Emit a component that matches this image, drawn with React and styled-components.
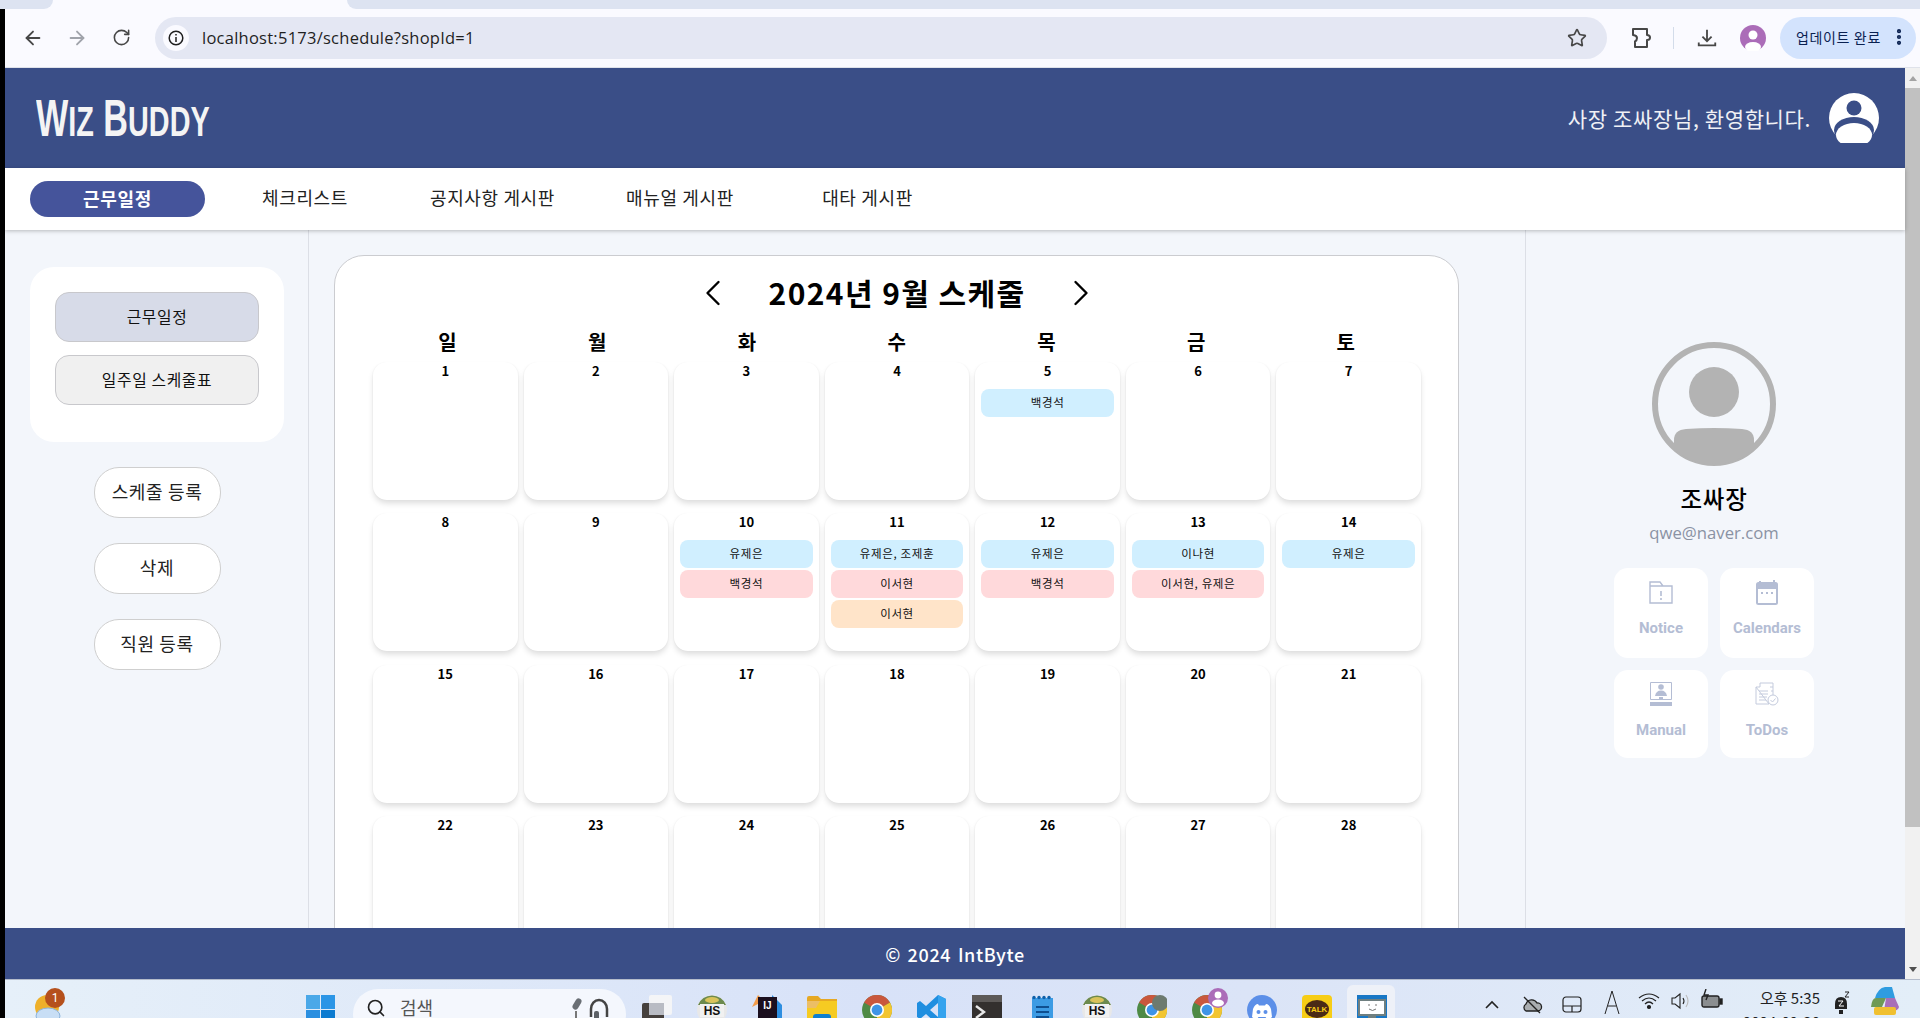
import React from 'react';
import styled, { createGlobalStyle } from 'styled-components';
import { ArrowLeft, ArrowRight, RotateCw, Star, EllipsisVertical, ChevronLeft, ChevronRight, Search } from 'lucide-react';

const Global = createGlobalStyle`
  html, body { margin: 0; padding: 0; height: 100%; overflow: hidden; }
  * { box-sizing: border-box; }
  body { font-family: "Noto Sans CJK KR", "Noto Sans", sans-serif; color: #000; letter-spacing: 0.04em; }
`;

const Screen = styled.div`
  width: 1920px;
  height: 1018px;
  overflow: hidden;
  background: #000;
  padding-left: 5px;
  display: flex;
  flex-direction: column;
`;

/* browser chrome */
const TabStrip = styled.div`
  height: 9px;
  background: #fafaff;
  display: flex;
  justify-content: space-between;
  margin-left: -5px;
`;
const TabGap = styled.div`
  height: 9px;
  width: ${p => p.$w};
  background: #dde3f1;
  border-radius: ${p => p.$radius};
`;
const Toolbar = styled.div`
  height: 59px;
  background: #fafaff;
  border-bottom: 1px solid #dfe2ea;
  display: flex;
  align-items: center;
  padding: 0 0 1px 6px;
  color: #474747;
`;
const NavIcon = styled.div`
  width: 44px;
  display: flex;
  justify-content: center;
  color: ${p => p.$dim ? '#a0a3ab' : '#474747'};
`;
const Omnibox = styled.div`
  margin: 0 12px;
  width: 1452px;
  height: 42px;
  border-radius: 21px;
  background: #e4e7f3;
  display: flex;
  align-items: center;
  padding: 0 20px 0 8px;
`;
const InfoDot = styled.div`
  width: 26px;
  height: 26px;
  border-radius: 50%;
  background: #fafaff;
  display: flex;
  align-items: center;
  justify-content: center;
  color: #1f1f1f;
`;
const UrlText = styled.span`
  margin-left: 13px;
  font: 16.5px "Open Sans", sans-serif;
  letter-spacing: 0.25px;
  color: #1f1f1f;
  flex: 1;
`;
const Separator = styled.div`
  width: 1px;
  height: 22px;
  background: #d3dcea;
  margin: 0 10px;
`;
const DownloadSlot = styled.div`
  width: 22px;
  margin-left: 12px;
  display: flex;
  justify-content: center;
`;
const ProfileDot = styled.div`
  width: 26px;
  height: 26px;
  margin: 0 14px 0 22px;
`;
const UpdatePill = styled.div`
  width: 136px;
  height: 42px;
  border-radius: 21px;
  background: #d3e3fd;
  display: flex;
  align-items: center;
  justify-content: space-between;
  padding: 0 7px 2px 16px;
  font-size: 14px;
  color: #0a2151;
  white-space: nowrap;
`;

/* page */
const PageRow = styled.div`
  flex: 1;
  min-height: 0;
  display: flex;
`;
const Page = styled.div`
  flex: 1;
  min-width: 0;
  display: flex;
  flex-direction: column;
`;
const ScrollBar = styled.div`
  width: 15px;
  background: #f1f1f1;
  display: flex;
  flex-direction: column;
  align-items: center;
`;
const ScrollArrow = styled.div`
  height: 20px;
  display: flex;
  align-items: center;
  &::before {
    content: '';
    border-left: 4px solid transparent;
    border-right: 4px solid transparent;
    ${p => p.$down ? 'border-top: 5px solid #505050;' : 'border-bottom: 5px solid #a3a3a3;'}
  }
`;
const ScrollThumb = styled.div`
  width: 15px;
  height: 739px;
  margin-bottom: auto;
  background: #c1c1c1;
`;
const Header = styled.header`
  height: 100px;
  background: #3a4e87;
  display: flex;
  align-items: center;
  justify-content: space-between;
  padding: 0 26px 0 31px;
`;
const Logo = styled.div`
  font: 700 51px/1 "Liberation Sans", sans-serif;
  letter-spacing: 0;
  color: #f4f4f4;
  white-space: nowrap;
  transform: scaleX(0.67);
  transform-origin: left center;
  span { font-size: 43px; }
`;
const UserArea = styled.div`
  display: flex;
  align-items: center;
  gap: 18px;
`;
const Welcome = styled.span`
  font-size: 21px;
  line-height: 30px;
  padding-bottom: 1px;
  color: #f0f1f5;
`;
const TopNav = styled.nav`
  height: 62px;
  flex: none;
  background: #fff;
  display: flex;
  align-items: center;
  gap: 12.5px;
  padding-left: 25px;
  box-shadow: 0 1px 4px rgba(0, 0, 0, 0.25);
  position: relative;
`;
const NavItem = styled.div`
  width: 175px;
  height: 36px;
  border-radius: 18px;
  display: flex;
  align-items: center;
  justify-content: center;
  padding-bottom: ${p => p.$active ? 3 : 5}px;
  font-size: 18px;
  font-weight: ${p => p.$active ? 700 : 400};
  color: ${p => p.$active ? '#fff' : '#222'};
  background: ${p => p.$active ? '#45549b' : 'transparent'};
`;
const Body = styled.div`
  flex: 1;
  min-height: 0;
  overflow: hidden;
  display: flex;
  background: #f3f6fb;
`;
const LeftBar = styled.aside`
  width: 304px;
  flex: none;
  border-right: 1px solid #dcdfe6;
  padding: 37px 24px 0 25px;
  display: flex;
  flex-direction: column;
  align-items: center;
`;
const TabCard = styled.div`
  width: 254px;
  height: 175px;
  border-radius: 24px;
  background: #fff;
  padding: 25px;
  display: flex;
  flex-direction: column;
  gap: 13px;
  margin-bottom: 25px;
`;
const TabButton = styled.div`
  height: 50px;
  border-radius: 14px;
  border: 1px solid #c8c8cc;
  background: ${p => p.$active ? '#d7dbe8' : '#f0f0f0'};
  display: flex;
  align-items: center;
  justify-content: center;
  padding-bottom: 2px;
  font-size: 15.8px;
  color: #111;
`;
const ActionButton = styled.div`
  width: 127px;
  height: 51px;
  border-radius: 25px;
  border: 1px solid #cfcfcf;
  background: #fff;
  display: flex;
  align-items: center;
  justify-content: center;
  padding-bottom: 3px;
  font-size: 18px;
  color: #222;
  margin-bottom: 25px;
`;
const Main = styled.main`
  width: 1216px;
  flex: none;
  padding: 25px 0 0 25px;
`;
const CalendarCard = styled.section`
  width: 1125px;
  border: 1px solid #cbccd0;
  border-radius: 30px;
  background: #fff;
  padding: 15px 37px 30px 38px;
`;
const TitleRow = styled.div`
  height: 44px;
  display: flex;
  align-items: center;
  justify-content: center;
  gap: 34px;
`;
const Title = styled.h2`
  margin: 0;
  font-size: 30px;
  line-height: 44px;
  font-weight: 700;
  letter-spacing: 1.4px;
  padding-bottom: 2px;
`;
const WeekRow = styled.div`
  display: grid;
  grid-template-columns: repeat(7, 1fr);
  height: 30px;
  margin-top: 12px;
  margin-bottom: 5px;
`;
const WeekDay = styled.div`
  text-align: center;
  font-size: 20px;
  line-height: 30px;
  font-weight: 700;
`;
const DayGrid = styled.div`
  display: grid;
  grid-template-columns: repeat(7, 1fr);
  column-gap: 6px;
  row-gap: 13.4px;
`;
const DayCell = styled.div`
  height: 138px;
  border-radius: 14px;
  background: #fff;
  box-shadow: 0 4px 6px -1px rgba(0, 0, 0, 0.15), 1px 0 1px rgba(0, 0, 0, 0.025), -1px 0 1px rgba(0, 0, 0, 0.025);
  padding: 0 6px;
  display: flex;
  flex-direction: column;
  gap: 2px;
`;
const DayNum = styled.div`
  font-size: 13px;
  line-height: 18px;
  font-weight: 700;
  letter-spacing: 0;
  text-align: center;
  margin-bottom: 7px;
`;
const EVENT_BG = { blue: '#d0efff', red: '#ffd9db', orange: '#ffe4c9' };
const Event = styled.div`
  height: 28px;
  flex: none;
  border-radius: 8px;
  background: ${p => EVENT_BG[p.$kind]};
  display: flex;
  align-items: center;
  justify-content: center;
  padding-bottom: 2px;
  font-size: 11.5px;
  color: #111;
`;
const RightBar = styled.aside`
  flex: 1;
  border-left: 1px solid #dcdfe6;
  padding: 112px 3px 0 0;
  display: flex;
  flex-direction: column;
  align-items: center;
`;
const Name = styled.div`
  font-size: 23.5px;
  line-height: 30px;
  font-weight: 500;
  margin-top: 17px;
`;
const Email = styled.div`
  font: 16.7px/24px "Open Sans", sans-serif;
  letter-spacing: 0;
  color: #8a92a3;
  margin-top: 8px;
`;
const ShortcutGrid = styled.div`
  display: grid;
  grid-template-columns: 94px 94px;
  grid-template-rows: 90px 88px;
  gap: 12px;
  margin-top: 23px;
`;
const Shortcut = styled.div`
  border-radius: 14px;
  background: #fff;
  padding-top: 12px;
  display: flex;
  flex-direction: column;
  align-items: center;
  gap: 14px;
`;
const ShortcutLabel = styled.span`
  font: 700 15px/20px Roboto, sans-serif;
  letter-spacing: 0;
  color: #b4bdd4;
  margin-top: ${p => p.$lift ? '-2px' : 0};
`;
const Footer = styled.footer`
  height: 51px;
  flex: none;
  background: #3a4e87;
  display: flex;
  align-items: center;
  justify-content: center;
  font-size: 18px;
  font-weight: 500;
  word-spacing: 2px;
  color: #fff;
`;

/* windows taskbar */
const Taskbar = styled.div`
  height: 39px;
  flex: none;
  border-top: 1px solid #b4bccb;
  background: linear-gradient(90deg, #e6f0f9 0%, #d8e2f8 45%, #dbe4f7 65%, #e3eef8 100%);
  display: flex;
  align-items: flex-start;
  padding-right: 12px;
  overflow: hidden;
  letter-spacing: 0;
`;
const Weather = styled.div`
  position: relative;
  width: 30px;
  margin: 15px 0 0 28px;
`;
const Badge = styled.span`
  position: absolute;
  top: -7px;
  left: 12px;
  width: 20px;
  height: 20px;
  border-radius: 50%;
  background: #b5501c;
  color: #fff;
  font: 12px/20px Roboto, sans-serif;
  text-align: center;
`;
const WinLogo = styled.div`
  margin: 15px 0 0 243px;
  width: 29px;
  line-height: 0;
`;
const SearchBox = styled.div`
  margin: 9px 3px 0 18px;
  width: 273px;
  height: 50px;
  border-radius: 25px;
  background: #f4f7fd;
  display: flex;
  align-items: flex-start;
  padding: 8px 14px 0 13px;
  color: #222;
`;
const SearchIcon = styled(Search)`
  margin-top: 1px;
`;
const SearchText = styled.span`
  margin-left: 14px;
  font-size: 18px;
  line-height: 20px;
  color: #555;
  flex: 1;
`;
const Slot = styled.div`
  position: relative;
  width: 55px;
  flex: none;
  margin-top: 15px;
  display: flex;
  justify-content: center;
  line-height: 0;
  ${p => p.$active && `
    &::before {
      content: '';
      position: absolute;
      top: -10px;
      left: 3px;
      width: 48px;
      height: 50px;
      border-radius: 6px;
      background: #eef1f8;
    }
    svg { position: relative; }
  `}
`;
const Tray = styled.div`
  margin-left: auto;
  display: flex;
  color: #222;
`;
const TraySlot = styled.div`
  width: ${p => p.$w}px;
  margin-top: ${p => p.$top}px;
  display: flex;
  justify-content: center;
  line-height: 0;
`;
const Clock = styled.div`
  width: 92px;
  padding-top: 6px;
  text-align: right;
  font-size: 15px;
  line-height: 24px;
  color: #222;
`;
const BadgedChrome = styled.svg`
  margin: -7px 0 0 6px;
`;

const Avatar = () => (
  <svg width="50" height="50" viewBox="-25 -25 50 50">
    <circle r="25" fill="#fff" />
    <circle cy="-10" r="7.5" fill="#3a4e87" />
    <ellipse cy="12" rx="20" ry="13" fill="#3a4e87" />
    <ellipse cy="17" rx="18" ry="12" fill="#fff" />
  </svg>
);

const BigAvatar = () => (
  <svg width="124" height="124" viewBox="-62 -62 124 124">
    <defs>
      <clipPath id="ring"><circle r="60" /></clipPath>
    </defs>
    <circle r="59" fill="none" stroke="#b3b3b3" strokeWidth="6" />
    <circle cy="-12" r="25" fill="#b3b3b3" />
    <path d="M-40 42 V36 Q-40 26 -28 25 Q0 23 28 25 Q40 26 40 36 V42 L40 62 H-40 Z" fill="#b3b3b3" clipPath="url(#ring)" />
  </svg>
);

const PuzzleIcon = () => (
  <svg width="24" height="24" viewBox="0 0 24 24" fill="none" stroke="currentColor" strokeWidth="2" strokeLinejoin="round">
    <path d="M4 3 H18 V9 Q21 9 21 11.5 Q21 14 18 14 V21 H6 V15.5 Q8 14.5 8 12 Q8 9.5 4 9 Z" />
  </svg>
);
const DownloadIcon = () => (
  <svg width="24" height="24" viewBox="0 0 24 24" fill="none" stroke="currentColor" strokeWidth="2">
    <path d="M12 3 V15 M7 10.5 L12 15.5 L17 10.5 M3 17 V20 H21 V17" />
  </svg>
);

const NoticeIcon = () => (
  <svg width="24" height="24" viewBox="0 0 24 24" fill="none" stroke="#b4bdd4" strokeWidth="1.4">
    <path d="M1 23 V2 H11 L14 6 H23 V23 Z M1 6 H14" />
    <path d="M12 11 V16 M12 18 V20" strokeWidth="1.6" />
  </svg>
);
const CalendarIcon = () => (
  <svg width="24" height="26" viewBox="0 0 24 26">
    <rect x="1" y="2" width="22" height="23" rx="2.5" fill="#b4bdd4" />
    <rect x="4" y="1" width="2" height="3" fill="#b4bdd4" />
    <rect x="18" y="0" width="2" height="3" fill="#b4bdd4" />
    <rect x="3" y="9" width="18" height="14" fill="#fff" />
    <rect x="6" y="12" width="2" height="2" fill="#b4bdd4" />
    <rect x="11" y="12" width="2" height="2" fill="#b4bdd4" />
    <rect x="16" y="12" width="2" height="2" fill="#b4bdd4" />
  </svg>
);
const ManualIcon = () => (
  <svg width="24" height="24" viewBox="0 0 24 24">
    <path d="M1.5 .5 H22.5 V17.5 H1.5 Z" fill="none" stroke="#b4bdd4" />
    <circle cx="12" cy="5" r="2.8" fill="#b4bdd4" />
    <path d="M6 14 Q7 8.5 12 8.5 Q17 8.5 18 14 Z" fill="#b4bdd4" />
    <rect x="10" y="15" width="4" height="3" fill="#b4bdd4" />
    <rect x="1" y="20" width="22" height="4" fill="#b4bdd4" />
  </svg>
);
const TodoIcon = () => (
  <svg width="24" height="24" viewBox="0 0 24 24" fill="none" stroke="#c4cbdd" strokeWidth="1">
    <path d="M5 1 H18 V14 M14 22 H1 V5 Z M5 1 V5 H1" />
    <path d="M4 9 H13 M4 12 H13 M4 15 H12 M4 18 H11 M15 5 H18 M16 9 H18" />
    <circle cx="18" cy="18" r="5" fill="#fff" />
    <path d="M15.5 18 L17.5 20 L20.5 16.5" />
  </svg>
);

/* taskbar icons, drawn by hand */
const ChromeParts = () => (
  <>
    <circle cx="15" cy="15" r="15" fill="#4e8a45" />
    <path d="M15 15 L2 7.5 A15 15 0 0 1 28 7.5 Z" fill="#c9573d" />
    <path d="M15 15 L28 7.5 A15 15 0 0 1 15 30 Z" fill="#f2c531" />
    <circle cx="15" cy="15" r="7" fill="#fff" />
    <circle cx="15" cy="15" r="5.4" fill="#3e94e6" />
  </>
);
const HsIcon = () => (
  <svg width="30" height="30" viewBox="0 0 30 30">
    <circle cx="15" cy="15" r="15" fill="#e8e8e8" />
    <path d="M1 10 A15 15 0 0 1 29 10 Z" fill="#6c8a4e" />
    <ellipse cx="15" cy="5" rx="7" ry="3" fill="#d9c35a" />
    <rect x="3" y="9" width="24" height="13" fill="#f1f1f1" />
    <text x="15" y="20" textAnchor="middle" fontFamily="Liberation Sans" fontWeight="700" fontSize="12" fill="#111">HS</text>
  </svg>
);

const TaskIcons = [
  <svg key="view" width="30" height="30" viewBox="0 0 30 30">
    <rect x="7" y="0" width="23" height="20" rx="2" fill="#f4f5f7" />
    <rect x="0" y="8" width="22" height="22" rx="2" fill="#45403d" />
    <rect x="7" y="8" width="15" height="12" fill="#b9bcc4" />
  </svg>,
  <HsIcon key="hs1" />,
  <svg key="ij" width="30" height="30" viewBox="0 0 30 30">
    <path d="M0 12 L6 0 L12 6 Z" fill="#f29c4b" />
    <path d="M20 0 L30 10 V30 H20 Z" fill="#2e8ee0" />
    <rect x="6" y="2" width="19" height="28" fill="#1b0f1e" />
    <text x="15.5" y="14" textAnchor="middle" fontFamily="Liberation Sans" fontWeight="700" fontSize="10" fill="#fff">IJ</text>
    <rect x="9" y="23" width="8" height="2" fill="#fff" />
  </svg>,
  <svg key="folder" width="30" height="30" viewBox="0 0 30 30">
    <path d="M0 3 Q0 1 2 1 H11 L14 4 H30 V30 H0 Z" fill="#e6a823" />
    <rect x="0" y="6" width="30" height="24" fill="#f6cb22" />
    <path d="M0 6 H13 L9 13 H0 Z" fill="#ecbe66" />
    <rect x="6" y="19" width="18" height="11" rx="3" fill="#0f7fcf" />
  </svg>,
  <svg key="chrome1" width="30" height="30" viewBox="0 0 30 30"><ChromeParts /></svg>,
  <svg key="code" width="30" height="30" viewBox="0 0 30 30">
    <path d="M21 0 L29 4 V26 L21 30 L9 19 L3 24 L0 22 V8 L3 6 L9 11 Z M21 8 L13 15 L21 22 Z" fill="#1f8ee0" />
    <path d="M21 0 L29 4 V26 L21 30 Z" fill="#35a3ee" />
  </svg>,
  <svg key="term" width="30" height="30" viewBox="0 0 30 30">
    <rect width="30" height="30" rx="2" fill="#33302e" />
    <rect width="30" height="7" fill="#5d5a58" />
    <path d="M4 11 L12 17 L4 23" fill="none" stroke="#e8e8e8" strokeWidth="2.4" />
    <rect x="14" y="24" width="9" height="2" fill="#e8e8e8" />
  </svg>,
  <svg key="notes" width="30" height="30" viewBox="0 0 30 30">
    <rect x="5" y="3" width="21" height="27" fill="#3c9be4" />
    {[7, 12, 17, 22].map(x => <circle key={x} cx={x} cy="2.5" r="1.7" fill="#0f60a8" />)}
    <path d="M9 12 H22 M9 17 H22 M9 22 H22" stroke="#0f4f90" strokeWidth="2" />
  </svg>,
  <HsIcon key="hs2" />,
  <svg key="chrome2" width="30" height="30" viewBox="0 0 30 30">
    <ChromeParts />
    <circle cx="23" cy="8" r="8" fill="#6d7a6f" />
  </svg>,
  <BadgedChrome key="chrome3" width="36" height="37" viewBox="0 0 36 37">
    <g transform="translate(0 7)"><ChromeParts /></g>
    <circle cx="26" cy="10" r="10" fill="#ab6cb8" />
    <circle cx="26" cy="7" r="3.4" fill="#fff" />
    <ellipse cx="26" cy="15" rx="6" ry="3.5" fill="#fff" />
  </BadgedChrome>,
  <svg key="discord" width="30" height="30" viewBox="0 0 30 30">
    <circle cx="15" cy="15" r="15" fill="#5c8fe8" />
    <path d="M6 14 Q8 9 11 9 L12 10.5 H18 L19 9 Q22 9 24 14 L25 22 Q23 24 20 24 L18.5 22 H11.5 L10 24 Q7 24 5 22 Z" fill="#fff" />
    <circle cx="11.5" cy="17" r="2" fill="#5c8fe8" />
    <circle cx="18.5" cy="17" r="2" fill="#5c8fe8" />
  </svg>,
  <svg key="talk" width="30" height="30" viewBox="0 0 30 30">
    <rect width="30" height="30" rx="4" fill="#f7cd16" />
    <ellipse cx="15" cy="14" rx="12" ry="9" fill="#4a2a16" />
    <text x="15" y="17" textAnchor="middle" fontFamily="Liberation Sans" fontWeight="700" fontSize="8" fill="#f7cd16">TALK</text>
  </svg>,
  <svg key="app" width="30" height="30" viewBox="0 0 30 30">
    <rect width="30" height="30" fill="#1877c5" />
    <rect x="1" y="4" width="28" height="17" fill="#6f7f80" />
    <rect x="3" y="6" width="24" height="13" fill="#fff" />
    <path d="M12 9 V11 M19 9 V11 M12 14 Q15.5 17 19 14" fill="none" stroke="#777" />
    <rect x="11" y="21" width="8" height="9" fill="#6f7f80" />
  </svg>,
];

const events = {
  5: [['blue', '백경석']],
  10: [['blue', '유제은'], ['red', '백경석']],
  11: [['blue', '유제은, 조제훈'], ['red', '이서현'], ['orange', '이서현']],
  12: [['blue', '유제은'], ['red', '백경석']],
  13: [['blue', '이나현'], ['red', '이서현, 유제은']],
  14: [['blue', '유제은']],
};
const days = Array.from({ length: 28 }, (_, i) => i + 1);

export default function App() {
  return (
    <Screen>
      <Global />
      <TabStrip>
        <TabGap $w="53px" $radius="0 0 10px 0" />
        <TabGap $w="1573px" $radius="0 0 0 10px" />
      </TabStrip>
      <Toolbar>
        <NavIcon><ArrowLeft size={22} /></NavIcon>
        <NavIcon $dim><ArrowRight size={22} /></NavIcon>
        <NavIcon><RotateCw size={19} /></NavIcon>
        <Omnibox>
          <InfoDot>
            <svg width="16" height="16" viewBox="0 0 16 16" fill="none" stroke="currentColor" strokeWidth="1.5">
              <circle cx="8" cy="8" r="6.8" />
              <path d="M8 7 V12 M8 4 V5.6" />
            </svg>
          </InfoDot>
          <UrlText>localhost:5173/schedule?shopId=1</UrlText>
          <Star size={20} />
        </Omnibox>
        <NavIcon><PuzzleIcon /></NavIcon>
        <Separator />
        <DownloadSlot><DownloadIcon /></DownloadSlot>
        <ProfileDot>
          <svg width="26" height="26" viewBox="-13 -13 26 26">
            <circle r="13" fill="#ab6cb8" />
            <circle cy="-3" r="4.5" fill="#fff" />
            <ellipse cy="9" rx="8" ry="5" fill="#fff" />
          </svg>
        </ProfileDot>
        <UpdatePill>
          업데이트 완료
          <EllipsisVertical size={20} strokeWidth={3} />
        </UpdatePill>
      </Toolbar>
      <PageRow>
        <Page>
          <Header>
            <Logo>W<span>IZ</span> B<span>UDDY</span></Logo>
            <UserArea>
              <Welcome>사장 조싸장님, 환영합니다.</Welcome>
              <Avatar />
            </UserArea>
          </Header>
          <TopNav>
            <NavItem $active>근무일정</NavItem>
            <NavItem>체크리스트</NavItem>
            <NavItem>공지사항 게시판</NavItem>
            <NavItem>매뉴얼 게시판</NavItem>
            <NavItem>대타 게시판</NavItem>
          </TopNav>
          <Body>
            <LeftBar>
              <TabCard>
                <TabButton $active>근무일정</TabButton>
                <TabButton>일주일 스케줄표</TabButton>
              </TabCard>
              <ActionButton>스케줄 등록</ActionButton>
              <ActionButton>삭제</ActionButton>
              <ActionButton>직원 등록</ActionButton>
            </LeftBar>
            <Main>
              <CalendarCard>
                <TitleRow>
                  <ChevronLeft size={44} strokeWidth={1.3} />
                  <Title>2024년 9월 스케줄</Title>
                  <ChevronRight size={44} strokeWidth={1.3} />
                </TitleRow>
                <WeekRow>
                  {['일', '월', '화', '수', '목', '금', '토'].map(d => <WeekDay key={d}>{d}</WeekDay>)}
                </WeekRow>
                <DayGrid>
                  {days.map(d => (
                    <DayCell key={d}>
                      <DayNum>{d}</DayNum>
                      {(events[d] || []).map(([kind, who], i) => <Event key={i} $kind={kind}>{who}</Event>)}
                    </DayCell>
                  ))}
                </DayGrid>
              </CalendarCard>
            </Main>
            <RightBar>
              <BigAvatar />
              <Name>조싸장</Name>
              <Email>qwe@naver.com</Email>
              <ShortcutGrid>
                <Shortcut><NoticeIcon /><ShortcutLabel>Notice</ShortcutLabel></Shortcut>
                <Shortcut><CalendarIcon /><ShortcutLabel $lift>Calendars</ShortcutLabel></Shortcut>
                <Shortcut><ManualIcon /><ShortcutLabel>Manual</ShortcutLabel></Shortcut>
                <Shortcut><TodoIcon /><ShortcutLabel>ToDos</ShortcutLabel></Shortcut>
              </ShortcutGrid>
            </RightBar>
          </Body>
          <Footer>© 2024 IntByte</Footer>
        </Page>
        <ScrollBar>
          <ScrollArrow />
          <ScrollThumb />
          <ScrollArrow $down />
        </ScrollBar>
      </PageRow>
      <Taskbar>
        <Weather>
          <svg width="30" height="30" viewBox="0 0 30 30">
            <circle cx="14" cy="12" r="12" fill="#eeb02a" />
            <ellipse cx="15" cy="21" rx="12" ry="8" fill="#c8def5" stroke="#8cb4dc" />
          </svg>
          <Badge>1</Badge>
        </Weather>
        <WinLogo>
          <svg width="29" height="29" viewBox="0 0 29 29">
            <rect width="14" height="14" fill="#4aa8e8" />
            <rect x="15" width="14" height="14" fill="#2b95e6" />
            <rect y="15" width="14" height="14" fill="#2a8fe0" />
            <rect x="15" y="15" width="14" height="14" fill="#0c7bd0" />
          </svg>
        </WinLogo>
        <SearchBox>
          <SearchIcon size={20} strokeWidth={2} />
          <SearchText>검색</SearchText>
          <svg width="42" height="30" viewBox="0 0 42 30">
            <rect x="4" y="1" width="6" height="12" rx="3" fill="#6a6f75" transform="rotate(30 7 7)" />
            <path d="M6 14 V26 M2 26 H10" stroke="#777" strokeWidth="2" />
            <path d="M21 20 V12 A8 9 0 0 1 37 12 V20" fill="none" stroke="#444" strokeWidth="2.5" />
            <rect x="24" y="14" width="5" height="11" rx="2" fill="#5d6166" />
          </svg>
        </SearchBox>
        {TaskIcons.map((icon, i) => <Slot key={i} $active={i === 13}>{icon}</Slot>)}
        <Tray>
          <TraySlot $w={41} $top={16}>
            <svg width="18" height="18" viewBox="0 0 18 18" fill="none" stroke="currentColor" strokeWidth="1.6"><path d="M3 12 L9 6 L15 12" /></svg>
          </TraySlot>
          <TraySlot $w={40} $top={16}>
            <svg width="22" height="18" viewBox="0 0 22 18" fill="#a9adb0" stroke="#222" strokeWidth="1.3">
              <path d="M5 15 A4 4 0 0 1 5 8 A6 6 0 0 1 16 7 A4 4 0 0 1 17 15 Z" />
              <path d="M3 1 L19 17" fill="none" />
            </svg>
          </TraySlot>
          <TraySlot $w={40} $top={16}>
            <svg width="20" height="18" viewBox="0 0 20 18" fill="none" stroke="currentColor" strokeWidth="1.2"><rect x="1" y="1" width="18" height="15" rx="3" /><path d="M1 10 H19 M10 10 V16" /></svg>
          </TraySlot>
          <TraySlot $w={40} $top={10}>
            <svg width="16" height="24" viewBox="0 0 16 24" fill="none" stroke="currentColor" strokeWidth="1"><path d="M1 24 L8 1 L15 24 M4 16 H12" /></svg>
          </TraySlot>
          <TraySlot $w={34} $top={12}>
            <svg width="22" height="18" viewBox="0 0 22 18" fill="none" stroke="currentColor" strokeWidth="1.2"><path d="M1 6 Q11 -2 21 6 M4 9 Q11 3 18 9 M7 12 Q11 8 15 12" /><circle cx="11" cy="15" r="1.5" fill="currentColor" /></svg>
          </TraySlot>
          <TraySlot $w={30} $top={12}>
            <svg width="20" height="18" viewBox="0 0 20 18" fill="none" stroke="currentColor" strokeWidth="1.1"><path d="M1 6 H4 L9 2 V16 L4 12 H1 Z M12 6 Q14 9 12 12" /><path d="M15 3 Q19 9 15 15" stroke="#bbb" /></svg>
          </TraySlot>
          <TraySlot $w={32} $top={9}>
            <svg width="22" height="20" viewBox="0 0 22 20" fill="none" stroke="currentColor" strokeWidth="1.4"><rect x="1" y="7" width="17" height="11" rx="2" fill="#8b8e90" /><path d="M5 0 L3 6 H7 L5 11" /><rect x="19" y="10" width="2" height="5" fill="currentColor" /></svg>
          </TraySlot>
          <Clock>오후 5:35<br />2024-09-30</Clock>
          <TraySlot $w={42} $top={11}>
            <svg width="18" height="24" viewBox="0 0 18 24"><path d="M9 6 Q3 6 3 13 V18 H15 V13 Q15 6 9 6 Z M7 19 H11 V23 H7 Z" fill="#222" /><path d="M6 10 H11 L7 15 H12" fill="none" stroke="#fff" /><path d="M13 1 H17 L13 6 H17" fill="none" stroke="#222" /></svg>
          </TraySlot>
          <TraySlot $w={46} $top={5}>
            <svg width="30" height="30" viewBox="0 0 30 30">
              <path d="M5 13 Q8 3 15 2 H22 L25 13 Z" fill="#2f9ce0" />
              <path d="M1 22 Q2 13 6 13 H16 L12 22 Z" fill="#6f9a55" />
              <path d="M16 13 H25 L29 22 Q28 26 22 26 H14 Z" fill="#a86fb8" />
              <rect x="4" y="22" width="22" height="8" rx="2" fill="#f0c030" />
            </svg>
          </TraySlot>
        </Tray>
      </Taskbar>
    </Screen>
  );
}
